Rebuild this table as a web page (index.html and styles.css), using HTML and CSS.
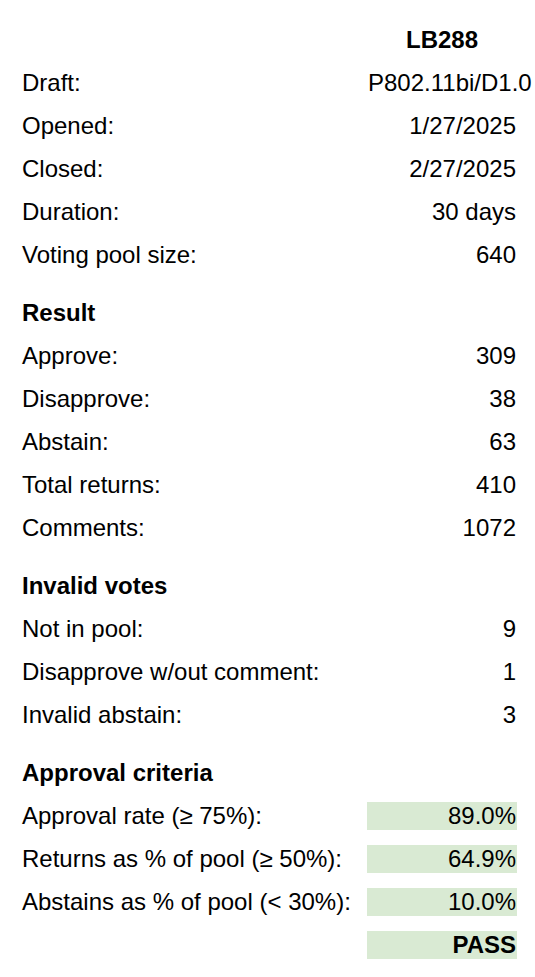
FILE: index.html
```html
<!DOCTYPE html>
<html>
<head>
<meta charset="utf-8">
<link rel="stylesheet" href="styles.css">
</head>
<body>
<div class="sheet">
  <div class="row"><span class="label"></span><span class="value center bold">LB288</span></div>
  <div class="row"><span class="label">Draft:</span><span class="value left">P802.11bi/D1.0</span></div>
  <div class="row"><span class="label">Opened:</span><span class="value">1/27/2025</span></div>
  <div class="row"><span class="label">Closed:</span><span class="value">2/27/2025</span></div>
  <div class="row"><span class="label">Duration:</span><span class="value">30 days</span></div>
  <div class="row"><span class="label">Voting pool size:</span><span class="value">640</span></div>

  <div class="row section"><span class="label bold">Result</span><span class="value"></span></div>
  <div class="row"><span class="label">Approve:</span><span class="value">309</span></div>
  <div class="row"><span class="label">Disapprove:</span><span class="value">38</span></div>
  <div class="row"><span class="label">Abstain:</span><span class="value">63</span></div>
  <div class="row"><span class="label">Total returns:</span><span class="value">410</span></div>
  <div class="row"><span class="label">Comments:</span><span class="value">1072</span></div>

  <div class="row section"><span class="label bold">Invalid votes</span><span class="value"></span></div>
  <div class="row"><span class="label">Not in pool:</span><span class="value">9</span></div>
  <div class="row"><span class="label">Disapprove w/out comment:</span><span class="value">1</span></div>
  <div class="row"><span class="label">Invalid abstain:</span><span class="value">3</span></div>

  <div class="row section"><span class="label bold">Approval criteria</span><span class="value"></span></div>
  <div class="row"><span class="label">Approval rate (≥ 75%):</span><span class="value ok">89.0%</span></div>
  <div class="row"><span class="label">Returns as % of pool (≥ 50%):</span><span class="value ok">64.9%</span></div>
  <div class="row"><span class="label">Abstains as % of pool (&lt; 30%):</span><span class="value ok">10.0%</span></div>
  <div class="row"><span class="label"></span><span class="value ok bold">PASS</span></div>
</div>
</body>
</html>
```
FILE: styles.css
```css
html, body {
  margin: 0;
  padding: 0;
  background: #ffffff;
}
body {
  font-family: "Liberation Sans", Arial, sans-serif;
  font-size: 24px;
  color: #000000;
}
.sheet {
  display: flex;
  flex-direction: column;
  gap: 15px;
  padding: 26px 18px 0 22px;
}
.row {
  display: grid;
  grid-template-columns: 1fr 150px;
  height: 28px;
  line-height: 28px;
}
.row.section {
  margin-top: 15px;
}
.label {
  white-space: nowrap;
}
.value {
  text-align: right;
  padding: 0 1px;
  white-space: nowrap;
  overflow: visible;
}
.value.left {
  text-align: left;
}
.value.center {
  text-align: center;
}
.value.ok {
  background: #d9ead3;
}
.bold {
  font-weight: bold;
}
```
